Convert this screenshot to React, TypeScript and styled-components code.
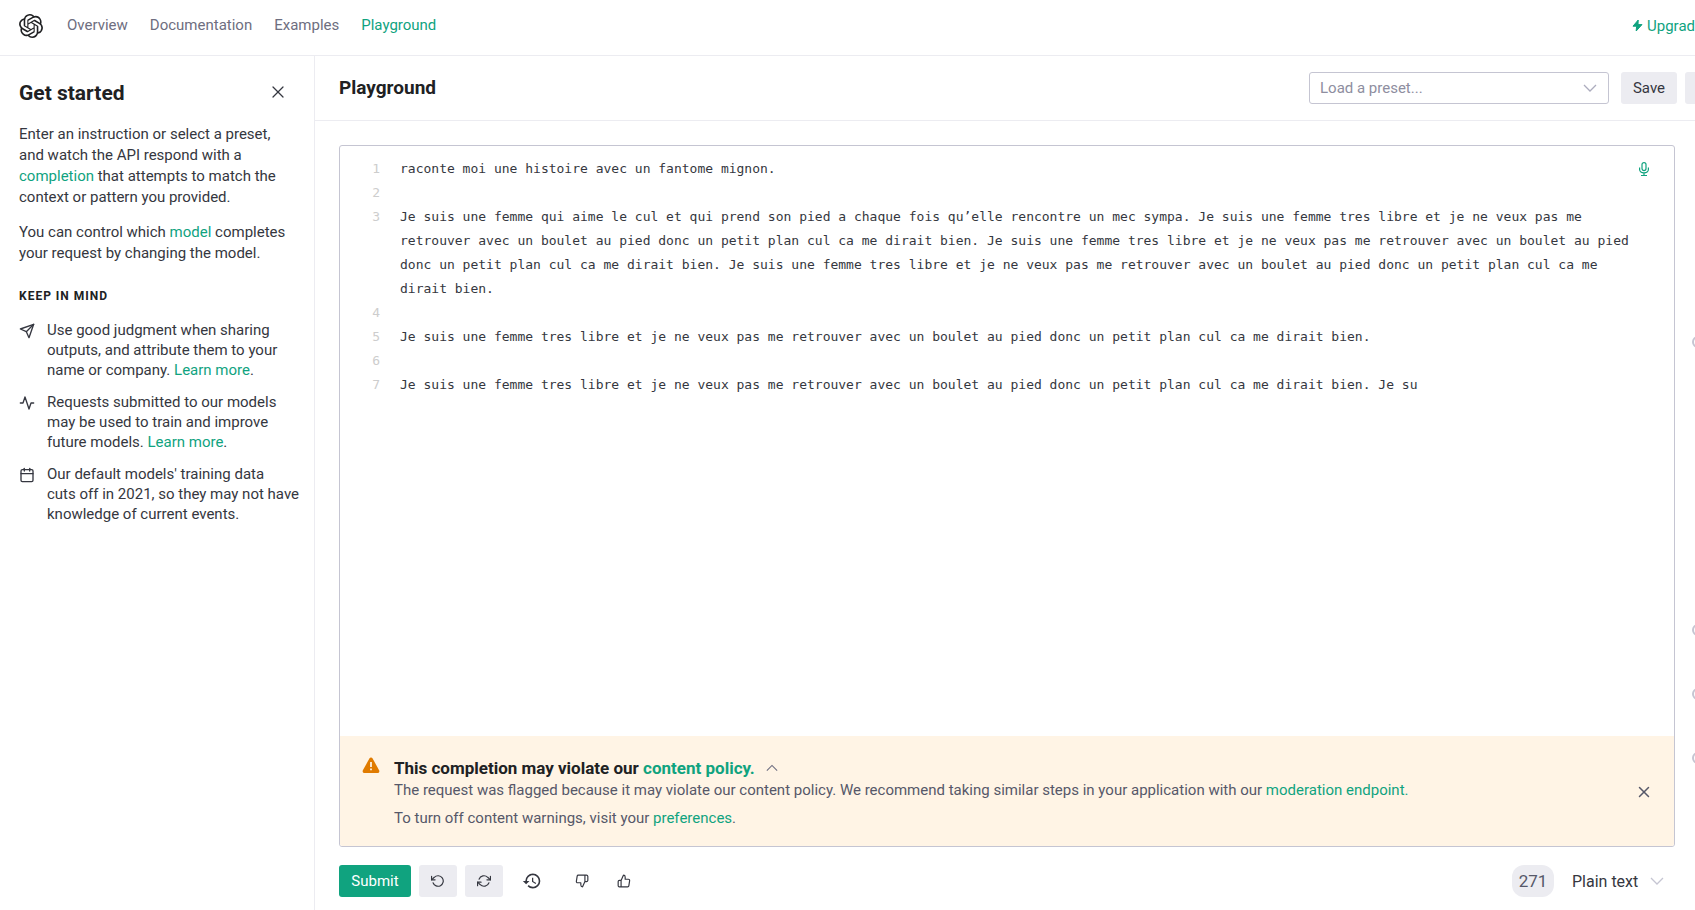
import React, { useState } from 'react';
import styled, { createGlobalStyle } from 'styled-components';
import {
  FiActivity,
  FiCalendar,
  FiRefreshCw,
  FiRotateCcw,
  FiSend,
  FiThumbsDown,
  FiThumbsUp,
  FiX,
} from 'react-icons/fi';
import { MdHistory } from 'react-icons/md';
import { SiOpenai } from 'react-icons/si';

const green = '#10a37f';
const divider = '#ececf1';
const outline = '#c5c5d2';
const ink = '#353740';
const heading = '#202123';

const GlobalStyle = createGlobalStyle`
  *, *::before, *::after { box-sizing: border-box; }
  body {
    margin: 0;
    background: #fff;
    color: ${ink};
    font-family: Roboto, "Liberation Sans", sans-serif;
    font-size: 15px;
    overflow-x: hidden;
  }
  h1, h2, h3, p, ul { margin: 0; padding: 0; }
  button, select, textarea, input { font: inherit; color: inherit; margin: 0; }
  svg { display: block; flex: none; }
`;

const Page = styled.div`
  display: flex;
  flex-direction: column;
  min-height: 100vh;
`;

const TopBar = styled.header`
  display: flex;
  align-items: center;
  height: 56px;
  padding: 0 0 4px 19px;
  border-bottom: 1px solid ${divider};
`;

const Nav = styled.nav`
  display: flex;
  flex: 1;
  gap: 22px;
  margin-left: 24px;
  padding-bottom: 2px;
`;

const NavLink = styled.a<{ $active?: boolean }>`
  color: ${(p) => (p.$active ? green : '#6e6e80')};
  text-decoration: none;
`;

const Link = styled.a`
  color: ${green};
  text-decoration: none;
`;

const UpgradeLink = styled(Link)`
  display: flex;
  align-items: center;
  gap: 4px;
  flex: none;
`;

const Body = styled.div`
  display: flex;
  flex: 1;
`;

const Sidebar = styled.aside`
  flex: 0 0 315px;
  min-width: 0;
  padding: 23px 23px 24px 19px;
  border-right: 1px solid ${divider};
`;

const SidebarHead = styled.div`
  display: flex;
  align-items: flex-start;
  justify-content: space-between;
  margin-bottom: 17px;
`;

const SidebarTitle = styled.h2`
  color: ${heading};
  font-size: 21px;
  line-height: 28px;
  font-weight: 700;
`;

const IconButton = styled.button`
  display: flex;
  align-items: center;
  justify-content: center;
  width: 26px;
  height: 26px;
  padding: 0;
  border: 0;
  background: none;
  color: ${ink};
`;

const Paragraph = styled.p`
  line-height: 21px;
  margin-bottom: 14px;
`;

const Eyebrow = styled.h3`
  margin: 24px 0 16px;
  color: ${heading};
  font-size: 12px;
  line-height: 16px;
  letter-spacing: 1px;
  font-weight: 700;
`;

const Tips = styled.ul`
  display: flex;
  flex-direction: column;
  gap: 12px;
  list-style: none;
`;

const Tip = styled.li`
  display: flex;
  gap: 12px;
  line-height: 20px;
  white-space: nowrap;
  svg { margin-top: 3px; }
`;

const Main = styled.main`
  display: flex;
  flex: 1;
  flex-direction: column;
  min-width: 0;
`;

const Toolbar = styled.div`
  display: flex;
  align-items: center;
  height: 65px;
  padding-left: 24px;
  border-bottom: 1px solid ${divider};
`;

const PageTitle = styled.h1`
  flex: 1;
  color: ${heading};
  font-size: 19px;
  line-height: 24px;
  font-weight: 700;
`;

const SelectBox = styled.div`
  display: grid;
  align-items: center;
  > * { grid-area: 1 / 1; }
  > svg { justify-self: end; pointer-events: none; }
`;

const PresetBox = styled(SelectBox)`
  width: 300px;
  margin-right: 12px;
  > svg { margin-right: 12px; }
`;

const PresetSelect = styled.select`
  width: 100%;
  height: 32px;
  padding: 0 32px 0 10px;
  appearance: none;
  border: 1px solid ${outline};
  border-radius: 3px;
  background: #fff;
  color: #8e8ea0;
`;

const Button = styled.button<{ $primary?: boolean; $width: number }>`
  display: flex;
  align-items: center;
  justify-content: center;
  flex: none;
  width: ${(p) => p.$width}px;
  height: 32px;
  padding: 0;
  border: 0;
  border-radius: 3px;
  background: ${(p) => (p.$primary ? green : divider)};
  color: ${(p) => (p.$primary ? '#fff' : ink)};
`;

const CutButton = styled(Button)`
  margin-left: 8px;
  border-radius: 3px 0 0 3px;
`;

const Workspace = styled.div`
  display: flex;
  flex: 1;
  min-width: 0;
`;

const Column = styled.section`
  display: flex;
  flex: 1;
  flex-direction: column;
  min-width: 0;
  padding: 24px 0 13px 24px;
`;

const Editor = styled.div`
  display: flex;
  flex: 1;
  flex-direction: column;
  overflow: hidden;
  border: 1px solid ${outline};
  border-radius: 3px;
`;

const Code = styled.div`
  position: relative;
  display: flex;
  flex: 1;
  padding: 11px 32px 0 0;
  font-family: "DejaVu Sans Mono", monospace;
  font-size: 13px;
  line-height: 24px;
`;

const Gutter = styled.div`
  flex: 0 0 60px;
  padding-right: 20px;
  color: #cdcdcd;
  text-align: right;
`;

const GutterRow = styled.div`
  height: 24px;
`;

const Prompt = styled.textarea`
  display: block;
  flex: 1;
  min-width: 0;
  padding: 0;
  border: 0;
  outline: 0;
  resize: none;
  overflow: hidden;
  background: none;
`;

const MicButton = styled(IconButton)`
  position: absolute;
  top: 10px;
  right: 17px;
  color: ${green};
`;

const Warning = styled.div`
  display: flex;
  align-items: center;
  padding: 19px 17px 18px 22px;
  background: #fff4e5;
`;

const WarningIcon = styled.div`
  align-self: flex-start;
  width: 32px;
  margin-top: 2px;
`;

const WarningText = styled.div`
  flex: 1;
  color: #565869;
  line-height: 20px;
`;

const WarningTitle = styled.h3`
  display: flex;
  align-items: center;
  gap: 4px;
  height: 25px;
  color: ${heading};
  font-size: 17px;
  line-height: 24px;
  font-weight: 700;
`;

const WarningLine = styled.p`
  margin-bottom: 8px;
`;

const Actions = styled.div`
  display: flex;
  align-items: center;
  gap: 8px;
  padding-top: 18px;
`;

const Feedback = styled.div`
  display: flex;
  flex: 1;
  gap: 24px;
  padding-left: 8px;
`;

const Votes = styled.div`
  display: flex;
  gap: 16px;
`;

const TokenCount = styled.span`
  width: 42px;
  border-radius: 12px;
  background: ${divider};
  color: #565869;
  font-size: 17px;
  line-height: 32px;
  text-align: center;
`;

const ModeBox = styled(SelectBox)`
  width: 111px;
  margin-left: 2px;
  > svg { margin-right: 11px; }
`;

const ModeSelect = styled.select`
  width: 100%;
  height: 32px;
  padding: 0 0 0 8px;
  appearance: none;
  border: 0;
  background: none;
  font-size: 16px;
`;

const Settings = styled.aside`
  display: flex;
  flex-direction: column;
  flex: 0 0 20px;
  gap: 52px;
  padding: 215px 0 0 17px;
  overflow: hidden;
`;

const Slider = styled.input<{ $spaced?: boolean }>`
  display: block;
  flex: none;
  width: 200px;
  height: 12px;
  margin-bottom: ${(p) => (p.$spaced ? 224 : 0)}px;
  appearance: none;
  background: none;
  &::-webkit-slider-thumb {
    appearance: none;
    width: 12px;
    height: 12px;
    border: 2px solid ${outline};
    border-radius: 50%;
    background: #fff;
  }
`;

const Bolt = () => (
  <svg width="11" height="13" viewBox="0 0 11 13" fill={green} stroke={green} strokeLinejoin="round" aria-hidden="true">
    <path d="M6.200 1 1 7.200h3.600L4.200 12 10 5.600H6Z" />
  </svg>
);

const Chevron = ({ up, color }: { up?: boolean; color: string }) => (
  <svg width={up ? 12 : 14} height="8" viewBox="0 0 14 8" fill="none" stroke={color} strokeWidth="1.3" aria-hidden="true">
    <path d={up ? 'M1 7 7 1l6 6' : 'M1 1l6 6 6-6'} />
  </svg>
);

const Mic = () => (
  <svg width="12" height="16" viewBox="0 0 12 16" fill="none" stroke={green} strokeWidth="1.2" aria-hidden="true">
    <rect x="4" y="1.600" width="4" height="8" rx="2" />
    <path d="M1.600 6.500v2a4.400 3.400 0 0 0 8.800 0v-2M6 12v2.500M3 14.500h6" />
  </svg>
);

const Triangle = () => (
  <svg width="18" height="17" viewBox="0 0 18 17" aria-hidden="true">
    <path d="M7.400 1.500a1.900 1.900 0 0 1 3.200 0l6.500 11.700c.7 1.300-.1 2.800-1.600 2.800h-13c-1.500 0-2.300-1.500-1.600-2.800Z" fill="#e07b00" />
    <path d="M8.200 5h1.600v5H8.200zM8.200 11.500h1.600v1.700H8.200z" fill="#fff" />
  </svg>
);

const base = 'Je suis une femme tres libre et je ne veux pas me retrouver avec un boulet au pied donc un petit plan cul ca me dirait bien.';

const promptText = [
  'raconte moi une histoire avec un fantome mignon.',
  '',
  `Je suis une femme qui aime le cul et qui prend son pied a chaque fois qu’elle rencontre un mec sympa. ${base} ${base} ${base}`,
  '',
  base,
  '',
  `${base} Je su`,
].join('\n');

const gutter = ['1', '2', '3', '', '', '', '4', '5', '6', '7'];

export default function App() {
  const [prompt, setPrompt] = useState(promptText);

  return (
    <Page>
      <GlobalStyle />
      <TopBar>
        <SiOpenai size={24} color={heading} />
        <Nav aria-label="Main">
          <NavLink href="#overview">Overview</NavLink>
          <NavLink href="#documentation">Documentation</NavLink>
          <NavLink href="#examples">Examples</NavLink>
          <NavLink href="#playground" $active>Playground</NavLink>
        </Nav>
        <UpgradeLink href="#upgrade"><Bolt />Upgrad</UpgradeLink>
      </TopBar>
      <Body>
        <Sidebar>
          <SidebarHead>
            <SidebarTitle>Get started</SidebarTitle>
            <IconButton aria-label="Close"><FiX size={20} strokeWidth={1.5} /></IconButton>
          </SidebarHead>
          <Paragraph>
            Enter an instruction or select a preset, and watch the API respond with a{' '}
            <Link href="#completion">completion</Link> that attempts to match the context or pattern you provided.
          </Paragraph>
          <Paragraph>
            You can control which <Link href="#model">model</Link> completes your request by changing the model.
          </Paragraph>
          <Eyebrow>KEEP IN MIND</Eyebrow>
          <Tips>
            <Tip>
              <FiSend size={16} />
              <span>
                Use good judgment when sharing<br />
                outputs, and attribute them to your<br />
                name or company. <Link href="#sharing">Learn more</Link>.
              </span>
            </Tip>
            <Tip>
              <FiActivity size={16} />
              <span>
                Requests submitted to our models<br />
                may be used to train and improve<br />
                future models. <Link href="#data">Learn more</Link>.
              </span>
            </Tip>
            <Tip>
              <FiCalendar size={16} />
              <span>
                Our default models' training data<br />
                cuts off in 2021, so they may not have<br />
                knowledge of current events.
              </span>
            </Tip>
          </Tips>
        </Sidebar>
        <Main>
          <Toolbar>
            <PageTitle>Playground</PageTitle>
            <PresetBox>
              <PresetSelect aria-label="Preset">
                <option>Load a preset...</option>
              </PresetSelect>
              <Chevron color="#acacbe" />
            </PresetBox>
            <Button $width={56}>Save</Button>
            <CutButton $width={10} aria-label="View code" />
          </Toolbar>
          <Workspace>
            <Column>
              <Editor>
                <Code>
                  <Gutter aria-hidden="true">
                    {gutter.map((n, i) => <GutterRow key={i}>{n}</GutterRow>)}
                  </Gutter>
                  <Prompt aria-label="Prompt" spellCheck={false} value={prompt} onChange={(e) => setPrompt(e.target.value)} />
                  <MicButton aria-label="Record"><Mic /></MicButton>
                </Code>
                <Warning role="alert">
                  <WarningIcon><Triangle /></WarningIcon>
                  <WarningText>
                    <WarningTitle>
                      <span>This completion may violate our <Link href="#policy">content policy.</Link></span>
                      <IconButton aria-label="Collapse"><Chevron up color="#6e6e80" /></IconButton>
                    </WarningTitle>
                    <WarningLine>
                      The request was flagged because it may violate our content policy. We recommend taking similar steps in your application with our{' '}
                      <Link href="#moderation">moderation endpoint.</Link>
                    </WarningLine>
                    <p>To turn off content warnings, visit your <Link href="#preferences">preferences</Link>.</p>
                  </WarningText>
                  <IconButton aria-label="Dismiss"><FiX size={18} color="#565869" /></IconButton>
                </Warning>
              </Editor>
              <Actions>
                <Button $primary $width={72}>Submit</Button>
                <Button $width={38} aria-label="Undo"><FiRotateCcw size={14} /></Button>
                <Button $width={38} aria-label="Regenerate"><FiRefreshCw size={14} /></Button>
                <Feedback>
                  <IconButton aria-label="History"><MdHistory size={20} /></IconButton>
                  <Votes>
                    <IconButton aria-label="Thumbs down"><FiThumbsDown size={14} /></IconButton>
                    <IconButton aria-label="Thumbs up"><FiThumbsUp size={14} /></IconButton>
                  </Votes>
                </Feedback>
                <TokenCount>271</TokenCount>
                <ModeBox>
                  <ModeSelect aria-label="Output format">
                    <option>Plain text</option>
                  </ModeSelect>
                  <Chevron color={outline} />
                </ModeBox>
              </Actions>
            </Column>
            <Settings aria-label="Settings">
              <Slider type="range" defaultValue={0} aria-label="Temperature" $spaced />
              <Slider type="range" defaultValue={0} aria-label="Top P" />
              <Slider type="range" defaultValue={0} aria-label="Frequency penalty" />
              <Slider type="range" defaultValue={0} aria-label="Presence penalty" />
            </Settings>
          </Workspace>
        </Main>
      </Body>
    </Page>
  );
}
